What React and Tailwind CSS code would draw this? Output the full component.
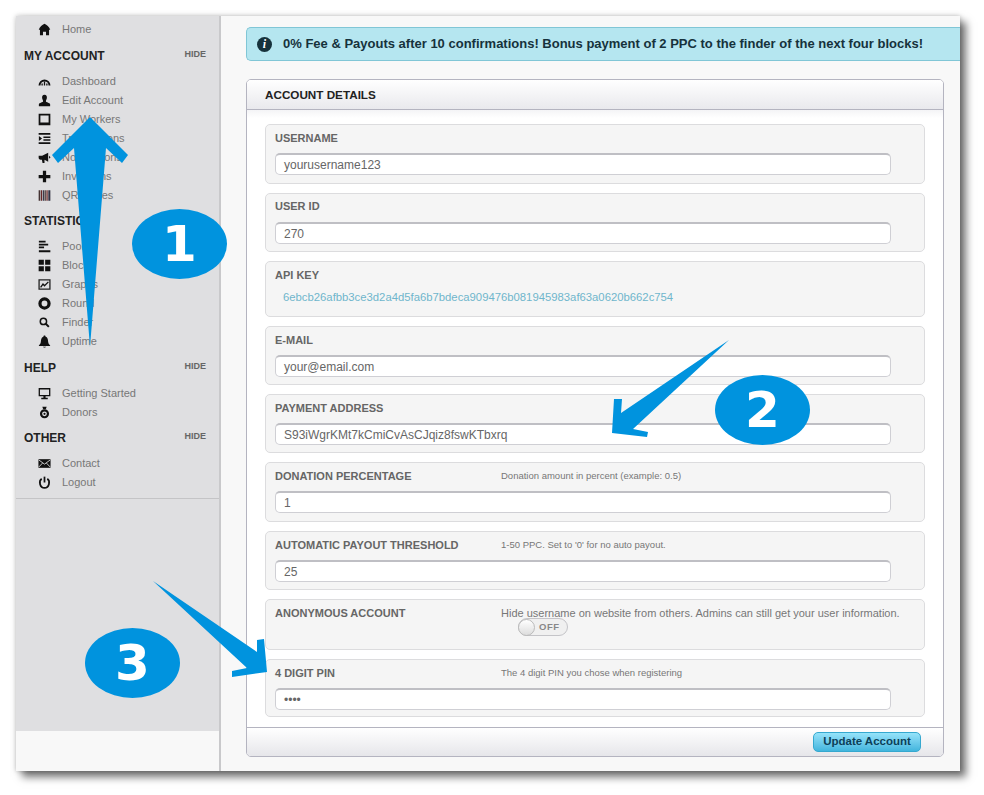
const Svg = ({ children }) => (
  <svg className="w-[13px] h-[13px]" viewBox="0 0 12 12" fill="#111">{children}</svg>
);

const icons = {
  home: <path d="M6 .8 C8 2 10.5 3.6 11.3 6.2 L10.2 6.2 V11.3 H7.4 V8 H4.6 V11.3 H1.8 V6.2 H.7 C1.5 3.6 4 2 6 .8Z" />,
  dash: (
    <g fill="none" stroke="#111">
      <path strokeWidth="1.8" d="M1.4 9.6 A4.6 4.6 0 0 1 10.6 9.6" />
      <path strokeWidth="1.2" d="M3.8 9.6V7.8M6 9.6V6M8.2 9.6V7.8" />
    </g>
  ),
  user: <path d="M6 .8 C7.8.8 8.4 2.2 8.2 3.8 8 5.2 7.3 5.8 7.3 6.8 7.3 7.8 10.8 8.2 11.2 9.4 V11.2 H.8 V9.4 C1.2 8.2 4.7 7.8 4.7 6.8 4.7 5.8 4 5.2 3.8 3.8 3.6 2.2 4.2.8 6 .8Z" />,
  laptop: <path fillRule="evenodd" d="M.6.8H11.4V11.2H.6ZM2.2 2.2V8.8H9.8V2.2Z" />,
  list: (
    <g>
      <path d="M.6 1H11.4V2.6H.6ZM5 4.2H11.4V5.6H5ZM5 6.6H11.4V8H5ZM.6 9.4H11.4V11H.6Z" />
      <path d="M.8 3.8 3.8 6 .8 8.2Z" />
    </g>
  ),
  bullhorn: <path d="M.6 4.4H3.8L9.4 1.6V10L6 8V11H4.2L3.6 8H2.4C1.2 8 .6 7 .6 6.2ZM10.2 4.4 11.6 5.8 10.2 7.2Z" />,
  plus: <path d="M4.5 .8H7.5V4.5H11.4V7.5H7.5V11.2H4.5V7.5H.6V4.5H4.5Z" />,
  barcode: (
    <g>
      <path fill="#433" d="M.6 1.2H2.2V10.8H.6ZM6 1.2H7.2V10.8H6Z" />
      <path fill="#622" d="M2.8 1.2H3.8V10.8H2.8ZM7.8 1.2H8.9V10.8H7.8Z" />
      <path fill="#334" d="M4.4 1.2H5.5V10.8H4.4ZM9.5 1.2H11.4V10.8H9.5Z" />
    </g>
  ),
  bars: <path d="M.8 .8H7V2.4H.8ZM.8 3.4H9.4V5H.8ZM.8 6H5.6V7.6H.8ZM.8 9.4H11.4V11.2H.8Z" />,
  blocks: <path d="M.6.6H5.4V5.4H.6ZM6.6.6H11.4V5.4H6.6ZM.6 6.6H5.4V11.4H.6ZM6.6 6.6H11.4V11.4H6.6Z" />,
  graph: (
    <g>
      <path fillRule="evenodd" fill="#222" d="M.4 1.2H11.6V10.8H.4ZM1.6 2.4V9.6H10.4V2.4Z" />
      <path fill="none" stroke="#111" strokeWidth="1.2" d="M2.4 8.6 4.6 5.6 6 7.2 9.6 3.6" />
    </g>
  ),
  ring: <circle cx="6" cy="6" r="4.2" fill="none" stroke="#111" strokeWidth="3" />,
  search: (
    <g fill="none" stroke="#111">
      <circle cx="5" cy="5" r="2.9" strokeWidth="1.4" />
      <path strokeWidth="1.8" d="M7.2 7.2 10 10" />
    </g>
  ),
  bell: <path d="M6 .4C6.7.4 7 .9 7 1.5 9.2 2.2 9.2 4.4 9.4 6.4 9.6 8 10.4 8.8 11.2 9.6V10.2H.8V9.6C1.6 8.8 2.4 8 2.6 6.4 2.8 4.4 2.8 2.2 5 1.5 5 .9 5.3.4 6 .4ZM4.6 10.8H7.4C7.2 11.8 4.8 11.8 4.6 10.8Z" />,
  monitor: <path fillRule="evenodd" d="M.6 1H11.4V8.6H7V10H9V11.2H3V10H5V8.6H.6ZM1.8 2.2V7.4H10.2V2.2Z" />,
  medal: (
    <g>
      <path d="M4 .6H8L7.2 3H4.8Z" />
      <circle cx="6" cy="7.2" r="3.2" fill="none" stroke="#111" strokeWidth="2" />
      <circle cx="6" cy="7.2" r="1" />
    </g>
  ),
  mail: (
    <g>
      <path d="M.4 2H11.6V10H.4Z" />
      <path fill="none" stroke="#ddd" strokeWidth=".8" d="M.6 2.6 6 6.6 11.4 2.6M.6 9.4 4.2 5.6M11.4 9.4 7.8 5.6" />
    </g>
  ),
  power: (
    <g fill="none" stroke="#111" strokeWidth="1.6">
      <path d="M6 .6V6" />
      <path d="M3.4 2.6C.4 4.6 1.6 11 6 11 10.4 11 11.6 4.6 8.6 2.6" />
    </g>
  ),
};

const sections = [
  {
    title: 'MY ACCOUNT',
    top: 'mt-[7px]',
    items: [
      ['dash', 'Dashboard'],
      ['user', 'Edit Account'],
      ['laptop', 'My Workers'],
      ['list', 'Transactions'],
      ['bullhorn', 'Notifications'],
      ['plus', 'Invitations'],
      ['barcode', 'QR Codes'],
    ],
  },
  {
    title: 'STATISTICS',
    top: 'mt-[6px]',
    items: [
      ['bars', 'Pool'],
      ['blocks', 'Blocks'],
      ['graph', 'Graphs'],
      ['ring', 'Round'],
      ['search', 'Finder'],
      ['bell', 'Uptime'],
    ],
  },
  { title: 'HELP', top: 'mt-[7px]', items: [['monitor', 'Getting Started'], ['medal', 'Donors']] },
  { title: 'OTHER', top: 'mt-[6px]', items: [['mail', 'Contact'], ['power', 'Logout']] },
];

const NavItem = ({ icon, label }) => (
  <a className="flex items-center h-[19px] text-[11px] text-[#777]">
    <span className="w-[13px] ml-[21.5px] mr-[11.5px] flex justify-center">
      <Svg>{icons[icon]}</Svg>
    </span>
    {label}
  </a>
);

const Sidebar = () => (
  <aside className="w-[205px] shrink-0 flex flex-col border-r-2 border-[#c9c9cb] bg-[#f8f8f8]">
    <div className="h-[715px] bg-[#dfdfe1]">
      <nav className="h-[483px] pt-[4px] border-b border-[#c4c4c6]">
        <NavItem icon="home" label="Home" />
        {sections.map((s) => (
          <div key={s.title} className={s.top}>
            <div className="flex items-start justify-between h-5 pl-2 pr-[13px] pt-[3px] mb-[6px]">
              <h3 className="font-bold text-[12px] leading-[14px] text-[#222]">{s.title}</h3>
              <span className="font-bold text-[9px] leading-[10px] text-[#666]">HIDE</span>
            </div>
            {s.items.map(([icon, label]) => (
              <NavItem key={label} icon={icon} label={label} />
            ))}
          </div>
        ))}
      </nav>
    </div>
  </aside>
);

const Input = ({ value }) => (
  <div className="h-[22px] w-[616px] px-[8px] rounded-[5px] bg-white border border-[#cfcfd4] border-t-2 border-t-[#bfbfc4] text-[12px] leading-[21px] text-[#666]">
    {value}
  </div>
);

const Field = ({ label, help, helpClass = 'text-[9.5px]', className = 'h-[59.3px]', children }) => (
  <div className={`${className} shrink-0 px-[9px] pt-[5px] rounded-[5px] border border-[#dcdcde] bg-[#f5f5f5]`}>
    <div className="flex items-center h-4 mb-[7px]">
      <label className="w-[226px] font-bold text-[11px] text-[#666]">{label}</label>
      {help && <span className={`${helpClass} text-[#777]`}>{help}</span>}
    </div>
    {children}
  </div>
);

const AccountCard = () => (
  <section className="mt-[18px] w-[698px] h-[678px] flex flex-col rounded-[5px] border border-[#b4b4c0] bg-white overflow-hidden">
    <header className="h-[30px] shrink-0 pl-[18px] pt-[1px] flex items-center border-b border-[#b4b4c0] bg-gradient-to-b from-white to-[#e9e9ed]">
      <h2 className="font-bold text-[11.7px] text-[#222]">ACCOUNT DETAILS</h2>
    </header>
    <div className="flex-1 pt-[14px] px-[18px] flex flex-col gap-[9px] bg-gradient-to-b from-[#f4f4f6] to-white to-[8px]">
      <Field label="USERNAME" className="h-[59.6px]"><Input value="yourusername123" /></Field>
      <Field label="USER ID"><Input value="270" /></Field>
      <Field label="API KEY" className="h-[56px]">
        <p className="pl-[8px] -mt-[1px] text-[11.3px] leading-[16px] text-[#6fb5cc]">
          6ebcb26afbb3ce3d2a4d5fa6b7bdeca909476b081945983af63a0620b662c754
        </p>
      </Field>
      <Field label="E-MAIL"><Input value="your@email.com" /></Field>
      <Field label="PAYMENT ADDRESS"><Input value="S93iWgrKMt7kCmiCvAsCJqiz8fswKTbxrq" /></Field>
      <Field label="DONATION PERCENTAGE" help="Donation amount in percent (example: 0.5)">
        <Input value="1" />
      </Field>
      <Field label="AUTOMATIC PAYOUT THRESHOLD" help="1-50 PPC. Set to '0' for no auto payout.">
        <Input value="25" />
      </Field>
      <Field
        label="ANONYMOUS ACCOUNT"
        help="Hide username on website from others. Admins can still get your user information."
        helpClass="text-[11px]"
        className="h-[51px]"
      >
        <div className="ml-[243px] -mt-[10px] w-[50px] h-[18px] flex items-center rounded-full border border-[#c4c4c8] bg-[#f0f0f0]">
          <span className="w-[17px] h-[17px] -ml-px rounded-full border border-[#bbb] bg-gradient-to-b from-white to-[#ddd]" />
          <span className="ml-[4px] font-bold text-[9.5px] tracking-[0.5px] text-[#888]">OFF</span>
        </div>
      </Field>
      <Field label="4 DIGIT PIN" help="The 4 digit PIN you chose when registering" className="h-[58.3px]">
        <Input value="••••" />
      </Field>
    </div>
    <footer className="h-[29px] shrink-0 flex items-center justify-end pr-[22px] border-t border-[#b4b4c0] bg-gradient-to-b from-white to-[#e6e6ea]">
      <button className="w-[108px] h-[20px] rounded-[5px] border border-[#36a8cf] bg-gradient-to-b from-[#95e3fa] to-[#41b5dd] font-bold text-[11.5px] text-[#0c3f58]">
        Update Account
      </button>
    </footer>
  </section>
);

const Bubble = ({ className, children }) => (
  <div className={`absolute w-[95px] h-[70px] flex items-center justify-center rounded-[50%] bg-[#0093de] text-white font-bold text-[50px] font-['DejaVu_Sans',sans-serif] ${className}`}>
    {children}
  </div>
);

const Annotations = () => (
  <>
    <svg className="absolute inset-0 w-[984px] h-[795px]" viewBox="0 0 984 795" fill="#0093de">
      <polygon points="90,117 128,155 122,163 106,148 90,347 74,148 58,163 52,155" />
      <polygon points="729,340 621,413 622,399 614,399 612,433 647,437 648,432 633,429" />
      <polygon points="153,581 257,652 257,640 264,639 267,672 232,677 232,671 247,668" />
    </svg>
    <Bubble className="left-[132px] top-[209px]">1</Bubble>
    <Bubble className="left-[715px] top-[375px]">2</Bubble>
    <Bubble className="left-[85px] top-[628px]">3</Bubble>
  </>
);

export default function App() {
  return (
    <div className="relative w-[984px] h-[795px] overflow-hidden bg-white pt-4 pl-4 font-['Liberation_Sans',Arial,sans-serif]">
      <div className="w-[944px] h-[755px] flex bg-[#f8f8f8] shadow-[6px_6px_8px_rgba(0,0,0,0.55),0_0_5px_rgba(0,0,0,0.25)]">
        <Sidebar />
        <main className="flex-1 pt-[11px] pl-[25px]">
          <div className="h-[34px] flex items-center pl-[10px] rounded-l-[5px] border border-r-0 border-[#80c6d6] bg-[#b5e6f0]">
            <span className="w-[15px] h-[15px] flex items-center justify-center rounded-full bg-[#16323c] text-white font-bold italic text-[12px] leading-none font-['Liberation_Serif',serif]">
              i
            </span>
            <p className="ml-[11px] font-bold text-[13px] text-[#16323c]">
              0% Fee &amp; Payouts after 10 confirmations! Bonus payment of 2 PPC to the finder of the next four blocks!
            </p>
          </div>
          <AccountCard />
        </main>
      </div>
      <Annotations />
    </div>
  );
}
